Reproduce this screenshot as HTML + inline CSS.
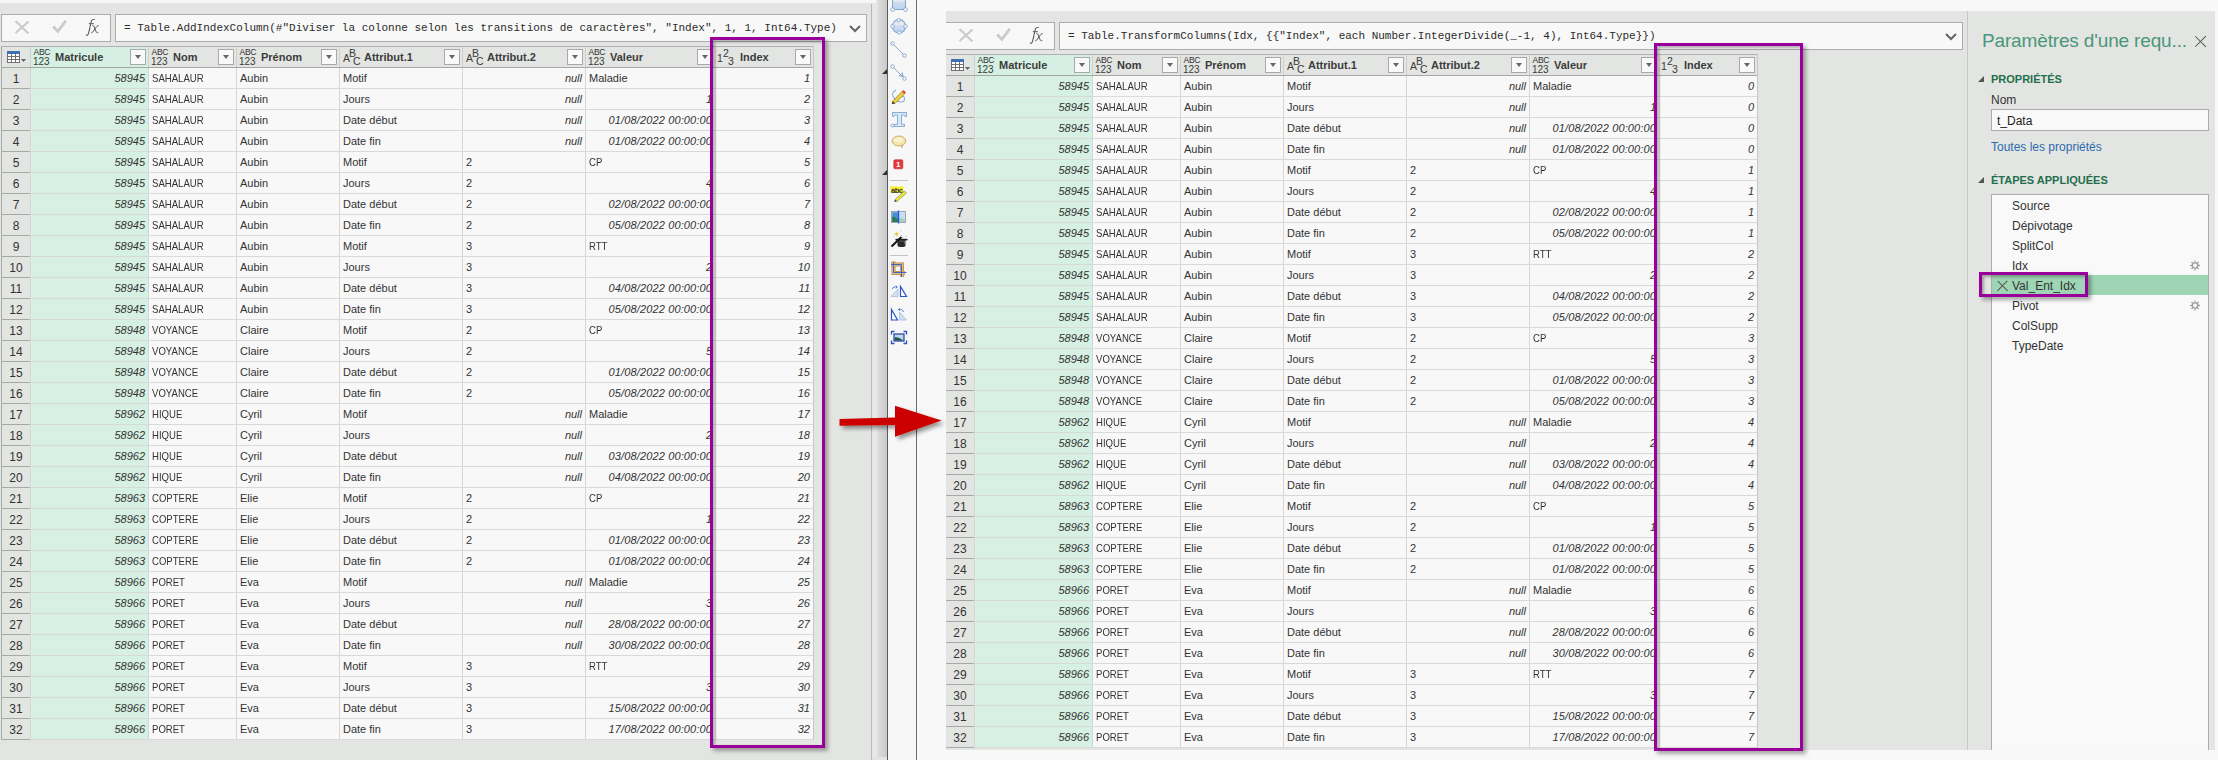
<!DOCTYPE html>
<html><head><meta charset="utf-8"><style>
html,body{margin:0;padding:0}
body{width:2218px;height:760px;overflow:hidden;position:relative;background:#f8f8f8;font-family:"Liberation Sans",sans-serif;color:#333}
div,span{box-sizing:border-box}
#lp{position:absolute;left:0;top:0;width:887px;height:760px;background:#e3e5e2;overflow:hidden}
.lp-top{position:absolute;left:0;top:0;width:876px;height:3px;background:#f6f6f6}
.lp-vl{position:absolute;left:871px;top:4px;width:1px;height:756px;background:#b9b9b9}
.lp-grad{position:absolute;left:872px;top:0px;width:15px;height:757px;background:linear-gradient(to right,#e6e8e5 0,#e6e8e5 5px,#dcdcdc 6px,#c9c9c9 15px)}
.lp-tri{position:absolute;left:882px;width:0;height:0;border-left:5px solid transparent;border-bottom:5px solid #333}
.pn{position:absolute;width:1100px;height:760px}
.fbl{position:absolute;left:1px;top:14px;width:110px;height:28px;border:1px solid #ababab;background:#f8f8f8}
.fbi{position:absolute;left:115px;top:14px;height:28px;border:1px solid #ababab;background:#f8f8f8}
.ftxt{position:absolute;left:8px;top:0;line-height:26px;font-family:"Liberation Mono",monospace;font-size:11px;color:#2a2a2a;white-space:pre}
.chev{position:absolute;right:5px;top:10px;width:12px;height:8px}
.fx-x{position:absolute;left:12px;top:4px;width:16px;height:16px}
.fx-x:before,.fx-x:after{content:"";position:absolute;left:7px;top:-1px;width:2px;height:18px;background:#c8c8c8;transform:rotate(45deg)}
.fx-x:after{transform:rotate(-45deg)}
.fx-c{position:absolute;left:54px;top:3px;width:7px;height:12px;border-right:2.5px solid #c8c8c8;border-bottom:2.5px solid #c8c8c8;transform:rotate(40deg)}
.fx-f{position:absolute;left:85px;top:2px;font-family:"Liberation Serif",serif;font-style:italic;font-size:17px;line-height:20px;color:#555;letter-spacing:-1px}
.hdr{position:absolute;height:22px;border-top:1px solid #b0b0b0;border-bottom:1px solid #a6a6a6;background:#e3e5e2}
.hc{position:absolute;top:47px;height:20px;border-left:1px solid #cfcfcf;background:#e3e5e2;white-space:nowrap}
.hc.sel{background:#d5f0e2}
.hn{position:absolute;left:24px;top:0;line-height:20px;font-size:11px;font-weight:bold;color:#3c3c3c}
.dd{position:absolute;right:2px;top:2px;width:16px;height:16px;border:1px solid #a9a9a9;background:#f9f9f9}
.dd:after{content:"";position:absolute;left:3.5px;top:4.5px;border-left:3.5px solid transparent;border-right:3.5px solid transparent;border-top:4px solid #666}
.ti{position:absolute;left:2px;top:2px;width:18px;height:17px;color:#3a3a3a}
.t1a{position:absolute;left:0.5px;top:-1px;font-size:8.6px;line-height:9px;letter-spacing:-0.35px;color:#333}
.t1b{position:absolute;left:0px;top:7.5px;font-size:10px;line-height:10px;letter-spacing:-0.1px}
.t2a,.t2b,.t2c{position:absolute;font-size:10.5px;line-height:10px}
.t2a{left:1px;top:4px}.t2b{left:7px;top:-1px}.t2c{left:11px;top:7px}
.tblico{position:absolute;width:20px;height:12px}
.c{position:absolute;height:21px;line-height:20px;font-size:11px;padding:0 3px;border-left:1px solid #d6d6d6;border-bottom:1px solid #d9d9d9;background:#f8f8f8;white-space:nowrap;overflow:hidden;color:#333}
.c.sel{background:#d6f0e3}
.c.ir{text-align:right;font-style:italic;padding-right:3px}
.rn{position:absolute;left:1px;width:30px;height:21px;line-height:22px;font-size:12px;text-align:center;border-left:1px solid #a8a8a8;border-right:1px solid #a8a8a8;border-bottom:1px solid #a8a8a8;background:#e3e5e2;color:#333}
#rp{position:absolute;left:917px;top:0;width:1301px;height:760px}
.rp-gray{position:absolute;left:29px;top:11px;width:1269px;height:739px;background:#e3e5e2}
.rp-clip{position:absolute;left:29px;top:0;width:1021px;height:750px;overflow:hidden}
.hl{position:absolute;border:3px solid #990099;box-shadow:3px 3px 4px rgba(0,0,0,.33),inset 2px 2px 3px rgba(0,0,0,.3)}
.ptitle{position:absolute;left:1065px;top:30px;font-size:19px;line-height:22px;color:#4a967a;white-space:nowrap;letter-spacing:-0.15px}
.pclose{position:absolute;left:1278px;top:36px;width:11px;height:11px}
.pclose:before,.pclose:after{content:"";position:absolute;left:5px;top:-2px;width:1.2px;height:15px;background:#555;transform:rotate(45deg)}
.pclose:after{transform:rotate(-45deg)}
.ptri{position:absolute;left:1061px;width:0;height:0;border-left:6px solid transparent;border-bottom:6px solid #555}
.psec{position:absolute;left:1074px;line-height:14px;font-size:11px;font-weight:bold;color:#1f6f4b;white-space:nowrap}
.plbl{position:absolute;left:1074px;line-height:16px;font-size:12px;color:#333}
.pinput{position:absolute;left:1074px;top:109px;width:218px;height:22px;border:1px solid #ababab;background:#f9f9f9;font-size:12px;line-height:22px;padding-left:5px;color:#222}
.plink{position:absolute;left:1074px;top:140px;line-height:14px;font-size:12px;color:#2b6cb0;white-space:nowrap}
.psteps{position:absolute;left:1074px;top:194px;width:218px;height:556px;border:1px solid #ababab;border-bottom:none;background:#f9f9f9}
.st{position:absolute;left:0;width:216px;height:20px;line-height:23px;font-size:12px;padding-left:20px;color:#333;white-space:nowrap}
.stsel{background:#9ed5b4}
.gear{position:absolute;right:7px;top:5px;width:12px;height:11px}
.stx{position:absolute;left:5px;top:5px;width:11px;height:11px}
.stx:before,.stx:after{content:"";position:absolute;left:5px;top:-1px;width:1.2px;height:13.5px;background:#555;transform:rotate(45deg)}
.stx:after{transform:rotate(-45deg)}
.rnh{position:absolute;left:1px;top:47px;width:30px;height:20px;border-left:1px solid #a8a8a8;border-right:1px solid #a8a8a8;background:#e3e5e2}
.tblico{position:absolute}
.up{display:inline-block;transform:scaleX(0.87);transform-origin:0 50%}
.c.dt{letter-spacing:0.13px}

</style></head><body>
<div id="lp">
<div class="lp-grad"></div>
<div class="lp-top"></div>
<div class="lp-vl"></div>
<div class="lp-tri" style="top:69px"></div>
<div class="lp-tri" style="top:170px"></div>
<div class="pn" style="left:0;top:0">
<div class="fbl"><svg width="110" height="28" viewBox="1 14 110 28" style="position:absolute;left:-1px;top:-1px"><path d="M15.5 21 L28.5 33.5 M28.5 21.5 L15.5 33" stroke="#cbcbcb" stroke-width="2.3" fill="none"/><path d="M53.2 26.5 L57.8 31.3 L65.8 20.8" stroke="#cbcbcb" stroke-width="2.8" fill="none"/><path d="M94.6 19.8 C93.4 19 91.8 19.6 91.3 21.5 L88.6 33.2 C88.2 35 87 35.6 86 35" stroke="#555" stroke-width="1.05" fill="none"/><path d="M88.8 23.7 H93.8" stroke="#555" stroke-width="0.95" fill="none"/><path d="M92.3 25.6 C93.3 25.4 93.8 26 94.2 27 L96.2 31.8 C96.6 32.7 97.3 33 98.3 32.4 M98.8 25.8 C98 25.4 97.3 25.8 96.6 26.6 L92.6 32.2 C92.1 32.9 91.6 32.8 91.2 32.5" stroke="#555" stroke-width="1" fill="none"/></svg></div>
<div class="fbi" style="width:752px"><span class="ftxt">= Table.AddIndexColumn(#&quot;Diviser la colonne selon les transitions de caractères&quot;, &quot;Index&quot;, 1, 1, Int64.Type)</span><svg class="chev" viewBox="0 0 12 8"><polyline points="1,1 6,6 11,1" fill="none" stroke="#666" stroke-width="2"/></svg></div>
<div class="hdr" style="left:1px;top:46px;width:813px;"></div>
<div class="rnh"></div>
<svg class="tblico" width="20" height="12" viewBox="0 0 20 12" shape-rendering="crispEdges" style="left:7px;top:51px"><rect x="0" y="0" width="13" height="12" fill="#707070"/><rect x="0" y="0" width="13" height="3" fill="#3f6fb4"/><path d="M1 3h3v2h-3zM5 3h3v2h-3zM9 3h3v2h-3zM1 6h3v2h-3zM5 6h3v2h-3zM9 6h3v2h-3zM1 9h3v2h-3zM5 9h3v2h-3zM9 9h3v2h-3z" fill="#fff"/><path d="M14 8H19L16.5 11Z" fill="#666" shape-rendering="auto"/></svg>
<div class="hc sel" style="left:30px;width:118px"><span class="ti ti1"><span class="t1a">ABC</span><span class="t1b">123</span></span><span class="hn">Matricule</span><span class="dd"></span></div>
<div class="hc" style="left:148px;width:88px"><span class="ti ti1"><span class="t1a">ABC</span><span class="t1b">123</span></span><span class="hn">Nom</span><span class="dd"></span></div>
<div class="hc" style="left:236px;width:103px"><span class="ti ti1"><span class="t1a">ABC</span><span class="t1b">123</span></span><span class="hn">Prénom</span><span class="dd"></span></div>
<div class="hc" style="left:339px;width:123px"><span class="ti ti2"><span class="t2a">A</span><span class="t2b">B</span><span class="t2c">C</span></span><span class="hn">Attribut.1</span><span class="dd"></span></div>
<div class="hc" style="left:462px;width:123px"><span class="ti ti2"><span class="t2a">A</span><span class="t2b">B</span><span class="t2c">C</span></span><span class="hn">Attribut.2</span><span class="dd"></span></div>
<div class="hc" style="left:585px;width:130px"><span class="ti ti1"><span class="t1a">ABC</span><span class="t1b">123</span></span><span class="hn">Valeur</span><span class="dd"></span></div>
<div class="hc" style="left:715px;width:98px"><span class="ti ti2"><span class="t2a" style="left:-1px">1</span><span class="t2b" style="left:5px">2</span><span class="t2c" style="left:10px">3</span></span><span class="hn">Index</span><span class="dd"></span></div>
<div style="position:absolute;left:813px;top:46px;width:1px;height:694px;background:#c8c8c8"></div>
<div class="rn" style="top:68px">1</div>
<div class="c ir sel" style="left:30px;top:68px;width:118px">58945</div>
<div class="c " style="left:148px;top:68px;width:88px"><span class="up">SAHALAUR</span></div>
<div class="c " style="left:236px;top:68px;width:103px">Aubin</div>
<div class="c " style="left:339px;top:68px;width:123px">Motif</div>
<div class="c ir" style="left:462px;top:68px;width:123px">null</div>
<div class="c " style="left:585px;top:68px;width:130px">Maladie</div>
<div class="c ir" style="left:715px;top:68px;width:98px">1</div>
<div class="rn" style="top:89px">2</div>
<div class="c ir sel" style="left:30px;top:89px;width:118px">58945</div>
<div class="c " style="left:148px;top:89px;width:88px"><span class="up">SAHALAUR</span></div>
<div class="c " style="left:236px;top:89px;width:103px">Aubin</div>
<div class="c " style="left:339px;top:89px;width:123px">Jours</div>
<div class="c ir" style="left:462px;top:89px;width:123px">null</div>
<div class="c ir" style="left:585px;top:89px;width:130px">1</div>
<div class="c ir" style="left:715px;top:89px;width:98px">2</div>
<div class="rn" style="top:110px">3</div>
<div class="c ir sel" style="left:30px;top:110px;width:118px">58945</div>
<div class="c " style="left:148px;top:110px;width:88px"><span class="up">SAHALAUR</span></div>
<div class="c " style="left:236px;top:110px;width:103px">Aubin</div>
<div class="c " style="left:339px;top:110px;width:123px">Date début</div>
<div class="c ir" style="left:462px;top:110px;width:123px">null</div>
<div class="c ir dt" style="left:585px;top:110px;width:130px">01/08/2022 00:00:00</div>
<div class="c ir" style="left:715px;top:110px;width:98px">3</div>
<div class="rn" style="top:131px">4</div>
<div class="c ir sel" style="left:30px;top:131px;width:118px">58945</div>
<div class="c " style="left:148px;top:131px;width:88px"><span class="up">SAHALAUR</span></div>
<div class="c " style="left:236px;top:131px;width:103px">Aubin</div>
<div class="c " style="left:339px;top:131px;width:123px">Date fin</div>
<div class="c ir" style="left:462px;top:131px;width:123px">null</div>
<div class="c ir dt" style="left:585px;top:131px;width:130px">01/08/2022 00:00:00</div>
<div class="c ir" style="left:715px;top:131px;width:98px">4</div>
<div class="rn" style="top:152px">5</div>
<div class="c ir sel" style="left:30px;top:152px;width:118px">58945</div>
<div class="c " style="left:148px;top:152px;width:88px"><span class="up">SAHALAUR</span></div>
<div class="c " style="left:236px;top:152px;width:103px">Aubin</div>
<div class="c " style="left:339px;top:152px;width:123px">Motif</div>
<div class="c " style="left:462px;top:152px;width:123px">2</div>
<div class="c " style="left:585px;top:152px;width:130px"><span class="up">CP</span></div>
<div class="c ir" style="left:715px;top:152px;width:98px">5</div>
<div class="rn" style="top:173px">6</div>
<div class="c ir sel" style="left:30px;top:173px;width:118px">58945</div>
<div class="c " style="left:148px;top:173px;width:88px"><span class="up">SAHALAUR</span></div>
<div class="c " style="left:236px;top:173px;width:103px">Aubin</div>
<div class="c " style="left:339px;top:173px;width:123px">Jours</div>
<div class="c " style="left:462px;top:173px;width:123px">2</div>
<div class="c ir" style="left:585px;top:173px;width:130px">4</div>
<div class="c ir" style="left:715px;top:173px;width:98px">6</div>
<div class="rn" style="top:194px">7</div>
<div class="c ir sel" style="left:30px;top:194px;width:118px">58945</div>
<div class="c " style="left:148px;top:194px;width:88px"><span class="up">SAHALAUR</span></div>
<div class="c " style="left:236px;top:194px;width:103px">Aubin</div>
<div class="c " style="left:339px;top:194px;width:123px">Date début</div>
<div class="c " style="left:462px;top:194px;width:123px">2</div>
<div class="c ir dt" style="left:585px;top:194px;width:130px">02/08/2022 00:00:00</div>
<div class="c ir" style="left:715px;top:194px;width:98px">7</div>
<div class="rn" style="top:215px">8</div>
<div class="c ir sel" style="left:30px;top:215px;width:118px">58945</div>
<div class="c " style="left:148px;top:215px;width:88px"><span class="up">SAHALAUR</span></div>
<div class="c " style="left:236px;top:215px;width:103px">Aubin</div>
<div class="c " style="left:339px;top:215px;width:123px">Date fin</div>
<div class="c " style="left:462px;top:215px;width:123px">2</div>
<div class="c ir dt" style="left:585px;top:215px;width:130px">05/08/2022 00:00:00</div>
<div class="c ir" style="left:715px;top:215px;width:98px">8</div>
<div class="rn" style="top:236px">9</div>
<div class="c ir sel" style="left:30px;top:236px;width:118px">58945</div>
<div class="c " style="left:148px;top:236px;width:88px"><span class="up">SAHALAUR</span></div>
<div class="c " style="left:236px;top:236px;width:103px">Aubin</div>
<div class="c " style="left:339px;top:236px;width:123px">Motif</div>
<div class="c " style="left:462px;top:236px;width:123px">3</div>
<div class="c " style="left:585px;top:236px;width:130px"><span class="up">RTT</span></div>
<div class="c ir" style="left:715px;top:236px;width:98px">9</div>
<div class="rn" style="top:257px">10</div>
<div class="c ir sel" style="left:30px;top:257px;width:118px">58945</div>
<div class="c " style="left:148px;top:257px;width:88px"><span class="up">SAHALAUR</span></div>
<div class="c " style="left:236px;top:257px;width:103px">Aubin</div>
<div class="c " style="left:339px;top:257px;width:123px">Jours</div>
<div class="c " style="left:462px;top:257px;width:123px">3</div>
<div class="c ir" style="left:585px;top:257px;width:130px">2</div>
<div class="c ir" style="left:715px;top:257px;width:98px">10</div>
<div class="rn" style="top:278px">11</div>
<div class="c ir sel" style="left:30px;top:278px;width:118px">58945</div>
<div class="c " style="left:148px;top:278px;width:88px"><span class="up">SAHALAUR</span></div>
<div class="c " style="left:236px;top:278px;width:103px">Aubin</div>
<div class="c " style="left:339px;top:278px;width:123px">Date début</div>
<div class="c " style="left:462px;top:278px;width:123px">3</div>
<div class="c ir dt" style="left:585px;top:278px;width:130px">04/08/2022 00:00:00</div>
<div class="c ir" style="left:715px;top:278px;width:98px">11</div>
<div class="rn" style="top:299px">12</div>
<div class="c ir sel" style="left:30px;top:299px;width:118px">58945</div>
<div class="c " style="left:148px;top:299px;width:88px"><span class="up">SAHALAUR</span></div>
<div class="c " style="left:236px;top:299px;width:103px">Aubin</div>
<div class="c " style="left:339px;top:299px;width:123px">Date fin</div>
<div class="c " style="left:462px;top:299px;width:123px">3</div>
<div class="c ir dt" style="left:585px;top:299px;width:130px">05/08/2022 00:00:00</div>
<div class="c ir" style="left:715px;top:299px;width:98px">12</div>
<div class="rn" style="top:320px">13</div>
<div class="c ir sel" style="left:30px;top:320px;width:118px">58948</div>
<div class="c " style="left:148px;top:320px;width:88px"><span class="up">VOYANCE</span></div>
<div class="c " style="left:236px;top:320px;width:103px">Claire</div>
<div class="c " style="left:339px;top:320px;width:123px">Motif</div>
<div class="c " style="left:462px;top:320px;width:123px">2</div>
<div class="c " style="left:585px;top:320px;width:130px"><span class="up">CP</span></div>
<div class="c ir" style="left:715px;top:320px;width:98px">13</div>
<div class="rn" style="top:341px">14</div>
<div class="c ir sel" style="left:30px;top:341px;width:118px">58948</div>
<div class="c " style="left:148px;top:341px;width:88px"><span class="up">VOYANCE</span></div>
<div class="c " style="left:236px;top:341px;width:103px">Claire</div>
<div class="c " style="left:339px;top:341px;width:123px">Jours</div>
<div class="c " style="left:462px;top:341px;width:123px">2</div>
<div class="c ir" style="left:585px;top:341px;width:130px">5</div>
<div class="c ir" style="left:715px;top:341px;width:98px">14</div>
<div class="rn" style="top:362px">15</div>
<div class="c ir sel" style="left:30px;top:362px;width:118px">58948</div>
<div class="c " style="left:148px;top:362px;width:88px"><span class="up">VOYANCE</span></div>
<div class="c " style="left:236px;top:362px;width:103px">Claire</div>
<div class="c " style="left:339px;top:362px;width:123px">Date début</div>
<div class="c " style="left:462px;top:362px;width:123px">2</div>
<div class="c ir dt" style="left:585px;top:362px;width:130px">01/08/2022 00:00:00</div>
<div class="c ir" style="left:715px;top:362px;width:98px">15</div>
<div class="rn" style="top:383px">16</div>
<div class="c ir sel" style="left:30px;top:383px;width:118px">58948</div>
<div class="c " style="left:148px;top:383px;width:88px"><span class="up">VOYANCE</span></div>
<div class="c " style="left:236px;top:383px;width:103px">Claire</div>
<div class="c " style="left:339px;top:383px;width:123px">Date fin</div>
<div class="c " style="left:462px;top:383px;width:123px">2</div>
<div class="c ir dt" style="left:585px;top:383px;width:130px">05/08/2022 00:00:00</div>
<div class="c ir" style="left:715px;top:383px;width:98px">16</div>
<div class="rn" style="top:404px">17</div>
<div class="c ir sel" style="left:30px;top:404px;width:118px">58962</div>
<div class="c " style="left:148px;top:404px;width:88px"><span class="up">HIQUE</span></div>
<div class="c " style="left:236px;top:404px;width:103px">Cyril</div>
<div class="c " style="left:339px;top:404px;width:123px">Motif</div>
<div class="c ir" style="left:462px;top:404px;width:123px">null</div>
<div class="c " style="left:585px;top:404px;width:130px">Maladie</div>
<div class="c ir" style="left:715px;top:404px;width:98px">17</div>
<div class="rn" style="top:425px">18</div>
<div class="c ir sel" style="left:30px;top:425px;width:118px">58962</div>
<div class="c " style="left:148px;top:425px;width:88px"><span class="up">HIQUE</span></div>
<div class="c " style="left:236px;top:425px;width:103px">Cyril</div>
<div class="c " style="left:339px;top:425px;width:123px">Jours</div>
<div class="c ir" style="left:462px;top:425px;width:123px">null</div>
<div class="c ir" style="left:585px;top:425px;width:130px">2</div>
<div class="c ir" style="left:715px;top:425px;width:98px">18</div>
<div class="rn" style="top:446px">19</div>
<div class="c ir sel" style="left:30px;top:446px;width:118px">58962</div>
<div class="c " style="left:148px;top:446px;width:88px"><span class="up">HIQUE</span></div>
<div class="c " style="left:236px;top:446px;width:103px">Cyril</div>
<div class="c " style="left:339px;top:446px;width:123px">Date début</div>
<div class="c ir" style="left:462px;top:446px;width:123px">null</div>
<div class="c ir dt" style="left:585px;top:446px;width:130px">03/08/2022 00:00:00</div>
<div class="c ir" style="left:715px;top:446px;width:98px">19</div>
<div class="rn" style="top:467px">20</div>
<div class="c ir sel" style="left:30px;top:467px;width:118px">58962</div>
<div class="c " style="left:148px;top:467px;width:88px"><span class="up">HIQUE</span></div>
<div class="c " style="left:236px;top:467px;width:103px">Cyril</div>
<div class="c " style="left:339px;top:467px;width:123px">Date fin</div>
<div class="c ir" style="left:462px;top:467px;width:123px">null</div>
<div class="c ir dt" style="left:585px;top:467px;width:130px">04/08/2022 00:00:00</div>
<div class="c ir" style="left:715px;top:467px;width:98px">20</div>
<div class="rn" style="top:488px">21</div>
<div class="c ir sel" style="left:30px;top:488px;width:118px">58963</div>
<div class="c " style="left:148px;top:488px;width:88px"><span class="up">COPTERE</span></div>
<div class="c " style="left:236px;top:488px;width:103px">Elie</div>
<div class="c " style="left:339px;top:488px;width:123px">Motif</div>
<div class="c " style="left:462px;top:488px;width:123px">2</div>
<div class="c " style="left:585px;top:488px;width:130px"><span class="up">CP</span></div>
<div class="c ir" style="left:715px;top:488px;width:98px">21</div>
<div class="rn" style="top:509px">22</div>
<div class="c ir sel" style="left:30px;top:509px;width:118px">58963</div>
<div class="c " style="left:148px;top:509px;width:88px"><span class="up">COPTERE</span></div>
<div class="c " style="left:236px;top:509px;width:103px">Elie</div>
<div class="c " style="left:339px;top:509px;width:123px">Jours</div>
<div class="c " style="left:462px;top:509px;width:123px">2</div>
<div class="c ir" style="left:585px;top:509px;width:130px">1</div>
<div class="c ir" style="left:715px;top:509px;width:98px">22</div>
<div class="rn" style="top:530px">23</div>
<div class="c ir sel" style="left:30px;top:530px;width:118px">58963</div>
<div class="c " style="left:148px;top:530px;width:88px"><span class="up">COPTERE</span></div>
<div class="c " style="left:236px;top:530px;width:103px">Elie</div>
<div class="c " style="left:339px;top:530px;width:123px">Date début</div>
<div class="c " style="left:462px;top:530px;width:123px">2</div>
<div class="c ir dt" style="left:585px;top:530px;width:130px">01/08/2022 00:00:00</div>
<div class="c ir" style="left:715px;top:530px;width:98px">23</div>
<div class="rn" style="top:551px">24</div>
<div class="c ir sel" style="left:30px;top:551px;width:118px">58963</div>
<div class="c " style="left:148px;top:551px;width:88px"><span class="up">COPTERE</span></div>
<div class="c " style="left:236px;top:551px;width:103px">Elie</div>
<div class="c " style="left:339px;top:551px;width:123px">Date fin</div>
<div class="c " style="left:462px;top:551px;width:123px">2</div>
<div class="c ir dt" style="left:585px;top:551px;width:130px">01/08/2022 00:00:00</div>
<div class="c ir" style="left:715px;top:551px;width:98px">24</div>
<div class="rn" style="top:572px">25</div>
<div class="c ir sel" style="left:30px;top:572px;width:118px">58966</div>
<div class="c " style="left:148px;top:572px;width:88px"><span class="up">PORET</span></div>
<div class="c " style="left:236px;top:572px;width:103px">Eva</div>
<div class="c " style="left:339px;top:572px;width:123px">Motif</div>
<div class="c ir" style="left:462px;top:572px;width:123px">null</div>
<div class="c " style="left:585px;top:572px;width:130px">Maladie</div>
<div class="c ir" style="left:715px;top:572px;width:98px">25</div>
<div class="rn" style="top:593px">26</div>
<div class="c ir sel" style="left:30px;top:593px;width:118px">58966</div>
<div class="c " style="left:148px;top:593px;width:88px"><span class="up">PORET</span></div>
<div class="c " style="left:236px;top:593px;width:103px">Eva</div>
<div class="c " style="left:339px;top:593px;width:123px">Jours</div>
<div class="c ir" style="left:462px;top:593px;width:123px">null</div>
<div class="c ir" style="left:585px;top:593px;width:130px">3</div>
<div class="c ir" style="left:715px;top:593px;width:98px">26</div>
<div class="rn" style="top:614px">27</div>
<div class="c ir sel" style="left:30px;top:614px;width:118px">58966</div>
<div class="c " style="left:148px;top:614px;width:88px"><span class="up">PORET</span></div>
<div class="c " style="left:236px;top:614px;width:103px">Eva</div>
<div class="c " style="left:339px;top:614px;width:123px">Date début</div>
<div class="c ir" style="left:462px;top:614px;width:123px">null</div>
<div class="c ir dt" style="left:585px;top:614px;width:130px">28/08/2022 00:00:00</div>
<div class="c ir" style="left:715px;top:614px;width:98px">27</div>
<div class="rn" style="top:635px">28</div>
<div class="c ir sel" style="left:30px;top:635px;width:118px">58966</div>
<div class="c " style="left:148px;top:635px;width:88px"><span class="up">PORET</span></div>
<div class="c " style="left:236px;top:635px;width:103px">Eva</div>
<div class="c " style="left:339px;top:635px;width:123px">Date fin</div>
<div class="c ir" style="left:462px;top:635px;width:123px">null</div>
<div class="c ir dt" style="left:585px;top:635px;width:130px">30/08/2022 00:00:00</div>
<div class="c ir" style="left:715px;top:635px;width:98px">28</div>
<div class="rn" style="top:656px">29</div>
<div class="c ir sel" style="left:30px;top:656px;width:118px">58966</div>
<div class="c " style="left:148px;top:656px;width:88px"><span class="up">PORET</span></div>
<div class="c " style="left:236px;top:656px;width:103px">Eva</div>
<div class="c " style="left:339px;top:656px;width:123px">Motif</div>
<div class="c " style="left:462px;top:656px;width:123px">3</div>
<div class="c " style="left:585px;top:656px;width:130px"><span class="up">RTT</span></div>
<div class="c ir" style="left:715px;top:656px;width:98px">29</div>
<div class="rn" style="top:677px">30</div>
<div class="c ir sel" style="left:30px;top:677px;width:118px">58966</div>
<div class="c " style="left:148px;top:677px;width:88px"><span class="up">PORET</span></div>
<div class="c " style="left:236px;top:677px;width:103px">Eva</div>
<div class="c " style="left:339px;top:677px;width:123px">Jours</div>
<div class="c " style="left:462px;top:677px;width:123px">3</div>
<div class="c ir" style="left:585px;top:677px;width:130px">3</div>
<div class="c ir" style="left:715px;top:677px;width:98px">30</div>
<div class="rn" style="top:698px">31</div>
<div class="c ir sel" style="left:30px;top:698px;width:118px">58966</div>
<div class="c " style="left:148px;top:698px;width:88px"><span class="up">PORET</span></div>
<div class="c " style="left:236px;top:698px;width:103px">Eva</div>
<div class="c " style="left:339px;top:698px;width:123px">Date début</div>
<div class="c " style="left:462px;top:698px;width:123px">3</div>
<div class="c ir dt" style="left:585px;top:698px;width:130px">15/08/2022 00:00:00</div>
<div class="c ir" style="left:715px;top:698px;width:98px">31</div>
<div class="rn" style="top:719px">32</div>
<div class="c ir sel" style="left:30px;top:719px;width:118px">58966</div>
<div class="c " style="left:148px;top:719px;width:88px"><span class="up">PORET</span></div>
<div class="c " style="left:236px;top:719px;width:103px">Eva</div>
<div class="c " style="left:339px;top:719px;width:123px">Date fin</div>
<div class="c " style="left:462px;top:719px;width:123px">3</div>
<div class="c ir dt" style="left:585px;top:719px;width:130px">17/08/2022 00:00:00</div>
<div class="c ir" style="left:715px;top:719px;width:98px">32</div>
</div>
</div>
<div id="tb" style="position:absolute;left:887px;top:0;width:30px;height:760px;background:#f7f7f7;border-left:1.5px solid #5a5a5a;border-right:1.5px solid #6a6a6a"></div>
<svg style="position:absolute;left:885px;top:0" width="35" height="360" viewBox="885 0 35 360">
<defs>
<linearGradient id="gb" x1="0" y1="0" x2="0" y2="1"><stop offset="0" stop-color="#ecebeb"/><stop offset="0.35" stop-color="#e8e9ec"/><stop offset="0.5" stop-color="#c9dcf1"/><stop offset="1" stop-color="#bcd4ee"/></linearGradient>
</defs>
<g stroke="#84a6ce" stroke-width="1" fill="none">
<!-- rectangle -->
<rect x="892.5" y="-4" width="13" height="13.5" fill="url(#gb)"/>
<circle cx="892.5" cy="9.5" r="1.8" fill="#fff"/><circle cx="905.5" cy="9.5" r="1.8" fill="#fff"/>
<!-- ellipse -->
<circle cx="899" cy="26.3" r="6.7" fill="url(#gb)" stroke-width="1.1"/>
<circle cx="898.5" cy="20.2" r="1.7" fill="#fff"/><circle cx="892.5" cy="26.3" r="1.7" fill="#fff"/><circle cx="905.5" cy="26.3" r="1.7" fill="#fff"/><circle cx="899.3" cy="32.4" r="1.7" fill="#fff"/>
<!-- line -->
<line x1="893.5" y1="44.5" x2="903.5" y2="54.6"/>
<circle cx="892.5" cy="43.5" r="1.7" fill="#fff"/><circle cx="904.5" cy="55.6" r="1.7" fill="#fff"/>
<!-- arrow line -->
<line x1="893.5" y1="67.5" x2="903.5" y2="77.6"/>
<path d="M899 75.5 L903 76.5 L902 72.5" stroke-width="1.2"/>
<circle cx="892.5" cy="66.5" r="1.7" fill="#fff"/><circle cx="904.5" cy="78.6" r="1.7" fill="#fff"/>
<!-- T -->
<path d="M892.5 112.5 H906.5 V116.5 H905 L904.3 115 H901.5 V124.3 H904.5 V126.5 H894.5 V124.3 H897.5 V115 H894.7 L894 116.5 H892.5 Z" fill="#d9e8f7" stroke="#7ea4d0" stroke-width="0.9"/>
<circle cx="892.5" cy="125.5" r="1.5" fill="#fff" stroke="#7ea4d0"/>
</g>
<!-- pencil scribble -->
<path d="M896 90 C891 93 892 97 896 100 C900 103 905 103 904.5 98 C904 95 900 96 897 98" stroke="#8bb2df" stroke-width="1.1" fill="none"/>
<path d="M892.5 101.5 L902 91.5 L904.5 94 L895 103.5 Z" fill="#f2cf3a" stroke="#8a6a10" stroke-width="0.7"/>
<path d="M902 91.5 L903.5 90 L906 92.5 L904.5 94 Z" fill="#e0483c"/>
<path d="M892.5 101.5 L891.8 104 L895 103.5 Z" fill="#222"/>
<!-- speech bubble -->
<ellipse cx="899" cy="141" rx="6.8" ry="5" fill="#f3e3a5" stroke="#c9a866" stroke-width="0.9"/>
<ellipse cx="898.5" cy="140" rx="4.8" ry="2.5" fill="#faf1cf"/>
<path d="M900.5 145.5 L902.5 148.5 L902.8 145" fill="#c9a866"/>
<!-- red 1 -->
<rect x="893.8" y="159.8" width="9" height="9" rx="1.2" fill="#e23a3a" stroke="#b82020" stroke-width="0.6"/>
<text x="898.3" y="167.3" font-family="Liberation Sans" font-weight="bold" font-size="8" fill="#fff" text-anchor="middle">1</text>
<line x1="890" y1="180.5" x2="908" y2="180.5" stroke="#c4c4c4" stroke-width="1"/>
<!-- abc highlighter -->
<rect x="890.5" y="186.5" width="13" height="6.5" fill="#f5ef2a"/>
<text x="891" y="192.5" font-family="Liberation Sans" font-weight="bold" font-size="7.5" fill="#333" letter-spacing="-0.5">abc</text>
<path d="M895 199.5 L904.5 191 L906.5 193 L897 201.5 Z" fill="#ebe53a" stroke="#6a6a40" stroke-width="0.5"/>
<path d="M895 199.5 L894.2 201.8 L897 201.5 Z" fill="#333"/>
<!-- image split -->
<rect x="891.5" y="211.5" width="14" height="11" fill="#dfe9ee" stroke="#8fa3a8" stroke-width="0.9"/>
<path d="M892.2 212.2 H898.5 V222 H892.2 Z" fill="#4a8fd8"/>
<path d="M892.2 222 V217 C894 216 896.5 218 898.5 220.5 V222 Z" fill="#2f7a52"/>
<path d="M899 212.2 H905 V222 H899 Z" fill="#c8dff0"/>
<path d="M899 218 C901 217 903 218.5 905 220 V222 H899 Z" fill="#a9cfc4"/>
<line x1="898.5" y1="210.5" x2="898.5" y2="223.5" stroke="#2a55d8" stroke-width="1.3"/>
<!-- magic wand -->
<path d="M897.5 240 H905.5 V245.5 C905.5 247.5 897.5 247.5 897.5 245.5 Z" fill="#2a2a2a"/>
<path d="M898.5 241 H904.5 V244" stroke="#777" stroke-width="0.8" fill="none"/>
<rect x="895.5" y="238.8" width="12" height="1.6" fill="#222"/>
<path d="M891.5 246.5 L902.5 236" stroke="#111" stroke-width="2"/>
<path d="M901.3 237.2 L903.6 235" stroke="#f2f2f2" stroke-width="1.8"/>
<path d="M896.5 231.5 l0.7 1.8 1.8 0.7 -1.8 0.7 -0.7 1.8 -0.7 -1.8 -1.8 -0.7 1.8 -0.7 Z" fill="#e3c12a"/>
<circle cx="901" cy="231" r="0.6" fill="#e3c12a"/><circle cx="906" cy="236.5" r="0.6" fill="#e3c12a"/><circle cx="894" cy="236" r="0.5" fill="#e3c12a"/>
<line x1="890" y1="255.5" x2="908" y2="255.5" stroke="#c4c4c4" stroke-width="1"/>
<!-- crop -->
<path d="M893.5 261.5 V273 H905 M891 264.5 H902 V277" stroke="#b98a4a" stroke-width="4" fill="none"/>
<path d="M893.5 261.5 V273 H905 M891 264.5 H902 V277" stroke="#e8b878" stroke-width="2.6" fill="none"/>
<path d="M893.5 262 V272.5 H906.5 M891 264.5 H901.5 V277" stroke="#2f5fd0" stroke-width="0.9" fill="none"/>
<!-- flip 1 -->
<path d="M891 296.5 L898 289 V296.5 Z" fill="#cfe0ef" stroke="#a8c0dc" stroke-width="0.8"/>
<path d="M900.5 296.5 V286.5 L906.5 296.5 Z" fill="#fff" stroke="#2a55c8" stroke-width="1.2"/>
<path d="M892 289 C893 287 895 286.5 897 287 M895.8 285.8 L897.3 287 L895.8 288.3" stroke="#3a6ad0" stroke-width="0.9" fill="none"/>
<!-- flip 2 -->
<path d="M891.5 320 V309.5 L897.5 320 Z" fill="#fff" stroke="#2a55c8" stroke-width="1.2"/>
<path d="M899.5 320 V312 L906.5 320 Z" fill="#cfe0ef" stroke="#a8c0dc" stroke-width="0.8"/>
<path d="M899 309.5 C901 309 903 310 903.5 312 M899.8 308.2 L898.5 309.5 L899.8 310.8" stroke="#3a6ad0" stroke-width="0.9" fill="none"/>
<!-- fit image -->
<path d="M891.5 334.5 V331.5 H894.5 M903.5 331.5 H906.5 V334.5 M906.5 340.5 V343.5 H903.5 M894.5 343.5 H891.5 V340.5" stroke="#2a55c8" stroke-width="1.3" fill="none"/>
<rect x="894" y="334" width="10" height="7" fill="#bcd7ee" stroke="#1f3fa0" stroke-width="1.2"/>
<path d="M894.6 340.4 V337.5 C897 336.5 900 338 903.4 340.4 Z" fill="#1d5a4a"/>
</svg>

<div id="rp">
<div class="rp-gray"></div>
<div class="rp-clip">
<div class="pn" style="left:-2px;top:8px">
<div class="fbl"><svg width="110" height="28" viewBox="1 14 110 28" style="position:absolute;left:-1px;top:-1px"><path d="M15.5 21 L28.5 33.5 M28.5 21.5 L15.5 33" stroke="#cbcbcb" stroke-width="2.3" fill="none"/><path d="M53.2 26.5 L57.8 31.3 L65.8 20.8" stroke="#cbcbcb" stroke-width="2.8" fill="none"/><path d="M94.6 19.8 C93.4 19 91.8 19.6 91.3 21.5 L88.6 33.2 C88.2 35 87 35.6 86 35" stroke="#555" stroke-width="1.05" fill="none"/><path d="M88.8 23.7 H93.8" stroke="#555" stroke-width="0.95" fill="none"/><path d="M92.3 25.6 C93.3 25.4 93.8 26 94.2 27 L96.2 31.8 C96.6 32.7 97.3 33 98.3 32.4 M98.8 25.8 C98 25.4 97.3 25.8 96.6 26.6 L92.6 32.2 C92.1 32.9 91.6 32.8 91.2 32.5" stroke="#555" stroke-width="1" fill="none"/></svg></div>
<div class="fbi" style="width:904px"><span class="ftxt">= Table.TransformColumns(Idx, {{&quot;Index&quot;, each Number.IntegerDivide(_-1, 4), Int64.Type}})</span><svg class="chev" viewBox="0 0 12 8"><polyline points="1,1 6,6 11,1" fill="none" stroke="#666" stroke-width="2"/></svg></div>
<div class="hdr" style="left:1px;top:46px;width:813px;"></div>
<div class="rnh"></div>
<svg class="tblico" width="20" height="12" viewBox="0 0 20 12" shape-rendering="crispEdges" style="left:7px;top:51px"><rect x="0" y="0" width="13" height="12" fill="#707070"/><rect x="0" y="0" width="13" height="3" fill="#3f6fb4"/><path d="M1 3h3v2h-3zM5 3h3v2h-3zM9 3h3v2h-3zM1 6h3v2h-3zM5 6h3v2h-3zM9 6h3v2h-3zM1 9h3v2h-3zM5 9h3v2h-3zM9 9h3v2h-3z" fill="#fff"/><path d="M14 8H19L16.5 11Z" fill="#666" shape-rendering="auto"/></svg>
<div class="hc sel" style="left:30px;width:118px"><span class="ti ti1"><span class="t1a">ABC</span><span class="t1b">123</span></span><span class="hn">Matricule</span><span class="dd"></span></div>
<div class="hc" style="left:148px;width:88px"><span class="ti ti1"><span class="t1a">ABC</span><span class="t1b">123</span></span><span class="hn">Nom</span><span class="dd"></span></div>
<div class="hc" style="left:236px;width:103px"><span class="ti ti1"><span class="t1a">ABC</span><span class="t1b">123</span></span><span class="hn">Prénom</span><span class="dd"></span></div>
<div class="hc" style="left:339px;width:123px"><span class="ti ti2"><span class="t2a">A</span><span class="t2b">B</span><span class="t2c">C</span></span><span class="hn">Attribut.1</span><span class="dd"></span></div>
<div class="hc" style="left:462px;width:123px"><span class="ti ti2"><span class="t2a">A</span><span class="t2b">B</span><span class="t2c">C</span></span><span class="hn">Attribut.2</span><span class="dd"></span></div>
<div class="hc" style="left:585px;width:130px"><span class="ti ti1"><span class="t1a">ABC</span><span class="t1b">123</span></span><span class="hn">Valeur</span><span class="dd"></span></div>
<div class="hc" style="left:715px;width:98px"><span class="ti ti2"><span class="t2a" style="left:-1px">1</span><span class="t2b" style="left:5px">2</span><span class="t2c" style="left:10px">3</span></span><span class="hn">Index</span><span class="dd"></span></div>
<div style="position:absolute;left:813px;top:46px;width:1px;height:694px;background:#c8c8c8"></div>
<div class="rn" style="top:68px">1</div>
<div class="c ir sel" style="left:30px;top:68px;width:118px">58945</div>
<div class="c " style="left:148px;top:68px;width:88px"><span class="up">SAHALAUR</span></div>
<div class="c " style="left:236px;top:68px;width:103px">Aubin</div>
<div class="c " style="left:339px;top:68px;width:123px">Motif</div>
<div class="c ir" style="left:462px;top:68px;width:123px">null</div>
<div class="c " style="left:585px;top:68px;width:130px">Maladie</div>
<div class="c ir" style="left:715px;top:68px;width:98px">0</div>
<div class="rn" style="top:89px">2</div>
<div class="c ir sel" style="left:30px;top:89px;width:118px">58945</div>
<div class="c " style="left:148px;top:89px;width:88px"><span class="up">SAHALAUR</span></div>
<div class="c " style="left:236px;top:89px;width:103px">Aubin</div>
<div class="c " style="left:339px;top:89px;width:123px">Jours</div>
<div class="c ir" style="left:462px;top:89px;width:123px">null</div>
<div class="c ir" style="left:585px;top:89px;width:130px">1</div>
<div class="c ir" style="left:715px;top:89px;width:98px">0</div>
<div class="rn" style="top:110px">3</div>
<div class="c ir sel" style="left:30px;top:110px;width:118px">58945</div>
<div class="c " style="left:148px;top:110px;width:88px"><span class="up">SAHALAUR</span></div>
<div class="c " style="left:236px;top:110px;width:103px">Aubin</div>
<div class="c " style="left:339px;top:110px;width:123px">Date début</div>
<div class="c ir" style="left:462px;top:110px;width:123px">null</div>
<div class="c ir dt" style="left:585px;top:110px;width:130px">01/08/2022 00:00:00</div>
<div class="c ir" style="left:715px;top:110px;width:98px">0</div>
<div class="rn" style="top:131px">4</div>
<div class="c ir sel" style="left:30px;top:131px;width:118px">58945</div>
<div class="c " style="left:148px;top:131px;width:88px"><span class="up">SAHALAUR</span></div>
<div class="c " style="left:236px;top:131px;width:103px">Aubin</div>
<div class="c " style="left:339px;top:131px;width:123px">Date fin</div>
<div class="c ir" style="left:462px;top:131px;width:123px">null</div>
<div class="c ir dt" style="left:585px;top:131px;width:130px">01/08/2022 00:00:00</div>
<div class="c ir" style="left:715px;top:131px;width:98px">0</div>
<div class="rn" style="top:152px">5</div>
<div class="c ir sel" style="left:30px;top:152px;width:118px">58945</div>
<div class="c " style="left:148px;top:152px;width:88px"><span class="up">SAHALAUR</span></div>
<div class="c " style="left:236px;top:152px;width:103px">Aubin</div>
<div class="c " style="left:339px;top:152px;width:123px">Motif</div>
<div class="c " style="left:462px;top:152px;width:123px">2</div>
<div class="c " style="left:585px;top:152px;width:130px"><span class="up">CP</span></div>
<div class="c ir" style="left:715px;top:152px;width:98px">1</div>
<div class="rn" style="top:173px">6</div>
<div class="c ir sel" style="left:30px;top:173px;width:118px">58945</div>
<div class="c " style="left:148px;top:173px;width:88px"><span class="up">SAHALAUR</span></div>
<div class="c " style="left:236px;top:173px;width:103px">Aubin</div>
<div class="c " style="left:339px;top:173px;width:123px">Jours</div>
<div class="c " style="left:462px;top:173px;width:123px">2</div>
<div class="c ir" style="left:585px;top:173px;width:130px">4</div>
<div class="c ir" style="left:715px;top:173px;width:98px">1</div>
<div class="rn" style="top:194px">7</div>
<div class="c ir sel" style="left:30px;top:194px;width:118px">58945</div>
<div class="c " style="left:148px;top:194px;width:88px"><span class="up">SAHALAUR</span></div>
<div class="c " style="left:236px;top:194px;width:103px">Aubin</div>
<div class="c " style="left:339px;top:194px;width:123px">Date début</div>
<div class="c " style="left:462px;top:194px;width:123px">2</div>
<div class="c ir dt" style="left:585px;top:194px;width:130px">02/08/2022 00:00:00</div>
<div class="c ir" style="left:715px;top:194px;width:98px">1</div>
<div class="rn" style="top:215px">8</div>
<div class="c ir sel" style="left:30px;top:215px;width:118px">58945</div>
<div class="c " style="left:148px;top:215px;width:88px"><span class="up">SAHALAUR</span></div>
<div class="c " style="left:236px;top:215px;width:103px">Aubin</div>
<div class="c " style="left:339px;top:215px;width:123px">Date fin</div>
<div class="c " style="left:462px;top:215px;width:123px">2</div>
<div class="c ir dt" style="left:585px;top:215px;width:130px">05/08/2022 00:00:00</div>
<div class="c ir" style="left:715px;top:215px;width:98px">1</div>
<div class="rn" style="top:236px">9</div>
<div class="c ir sel" style="left:30px;top:236px;width:118px">58945</div>
<div class="c " style="left:148px;top:236px;width:88px"><span class="up">SAHALAUR</span></div>
<div class="c " style="left:236px;top:236px;width:103px">Aubin</div>
<div class="c " style="left:339px;top:236px;width:123px">Motif</div>
<div class="c " style="left:462px;top:236px;width:123px">3</div>
<div class="c " style="left:585px;top:236px;width:130px"><span class="up">RTT</span></div>
<div class="c ir" style="left:715px;top:236px;width:98px">2</div>
<div class="rn" style="top:257px">10</div>
<div class="c ir sel" style="left:30px;top:257px;width:118px">58945</div>
<div class="c " style="left:148px;top:257px;width:88px"><span class="up">SAHALAUR</span></div>
<div class="c " style="left:236px;top:257px;width:103px">Aubin</div>
<div class="c " style="left:339px;top:257px;width:123px">Jours</div>
<div class="c " style="left:462px;top:257px;width:123px">3</div>
<div class="c ir" style="left:585px;top:257px;width:130px">2</div>
<div class="c ir" style="left:715px;top:257px;width:98px">2</div>
<div class="rn" style="top:278px">11</div>
<div class="c ir sel" style="left:30px;top:278px;width:118px">58945</div>
<div class="c " style="left:148px;top:278px;width:88px"><span class="up">SAHALAUR</span></div>
<div class="c " style="left:236px;top:278px;width:103px">Aubin</div>
<div class="c " style="left:339px;top:278px;width:123px">Date début</div>
<div class="c " style="left:462px;top:278px;width:123px">3</div>
<div class="c ir dt" style="left:585px;top:278px;width:130px">04/08/2022 00:00:00</div>
<div class="c ir" style="left:715px;top:278px;width:98px">2</div>
<div class="rn" style="top:299px">12</div>
<div class="c ir sel" style="left:30px;top:299px;width:118px">58945</div>
<div class="c " style="left:148px;top:299px;width:88px"><span class="up">SAHALAUR</span></div>
<div class="c " style="left:236px;top:299px;width:103px">Aubin</div>
<div class="c " style="left:339px;top:299px;width:123px">Date fin</div>
<div class="c " style="left:462px;top:299px;width:123px">3</div>
<div class="c ir dt" style="left:585px;top:299px;width:130px">05/08/2022 00:00:00</div>
<div class="c ir" style="left:715px;top:299px;width:98px">2</div>
<div class="rn" style="top:320px">13</div>
<div class="c ir sel" style="left:30px;top:320px;width:118px">58948</div>
<div class="c " style="left:148px;top:320px;width:88px"><span class="up">VOYANCE</span></div>
<div class="c " style="left:236px;top:320px;width:103px">Claire</div>
<div class="c " style="left:339px;top:320px;width:123px">Motif</div>
<div class="c " style="left:462px;top:320px;width:123px">2</div>
<div class="c " style="left:585px;top:320px;width:130px"><span class="up">CP</span></div>
<div class="c ir" style="left:715px;top:320px;width:98px">3</div>
<div class="rn" style="top:341px">14</div>
<div class="c ir sel" style="left:30px;top:341px;width:118px">58948</div>
<div class="c " style="left:148px;top:341px;width:88px"><span class="up">VOYANCE</span></div>
<div class="c " style="left:236px;top:341px;width:103px">Claire</div>
<div class="c " style="left:339px;top:341px;width:123px">Jours</div>
<div class="c " style="left:462px;top:341px;width:123px">2</div>
<div class="c ir" style="left:585px;top:341px;width:130px">5</div>
<div class="c ir" style="left:715px;top:341px;width:98px">3</div>
<div class="rn" style="top:362px">15</div>
<div class="c ir sel" style="left:30px;top:362px;width:118px">58948</div>
<div class="c " style="left:148px;top:362px;width:88px"><span class="up">VOYANCE</span></div>
<div class="c " style="left:236px;top:362px;width:103px">Claire</div>
<div class="c " style="left:339px;top:362px;width:123px">Date début</div>
<div class="c " style="left:462px;top:362px;width:123px">2</div>
<div class="c ir dt" style="left:585px;top:362px;width:130px">01/08/2022 00:00:00</div>
<div class="c ir" style="left:715px;top:362px;width:98px">3</div>
<div class="rn" style="top:383px">16</div>
<div class="c ir sel" style="left:30px;top:383px;width:118px">58948</div>
<div class="c " style="left:148px;top:383px;width:88px"><span class="up">VOYANCE</span></div>
<div class="c " style="left:236px;top:383px;width:103px">Claire</div>
<div class="c " style="left:339px;top:383px;width:123px">Date fin</div>
<div class="c " style="left:462px;top:383px;width:123px">2</div>
<div class="c ir dt" style="left:585px;top:383px;width:130px">05/08/2022 00:00:00</div>
<div class="c ir" style="left:715px;top:383px;width:98px">3</div>
<div class="rn" style="top:404px">17</div>
<div class="c ir sel" style="left:30px;top:404px;width:118px">58962</div>
<div class="c " style="left:148px;top:404px;width:88px"><span class="up">HIQUE</span></div>
<div class="c " style="left:236px;top:404px;width:103px">Cyril</div>
<div class="c " style="left:339px;top:404px;width:123px">Motif</div>
<div class="c ir" style="left:462px;top:404px;width:123px">null</div>
<div class="c " style="left:585px;top:404px;width:130px">Maladie</div>
<div class="c ir" style="left:715px;top:404px;width:98px">4</div>
<div class="rn" style="top:425px">18</div>
<div class="c ir sel" style="left:30px;top:425px;width:118px">58962</div>
<div class="c " style="left:148px;top:425px;width:88px"><span class="up">HIQUE</span></div>
<div class="c " style="left:236px;top:425px;width:103px">Cyril</div>
<div class="c " style="left:339px;top:425px;width:123px">Jours</div>
<div class="c ir" style="left:462px;top:425px;width:123px">null</div>
<div class="c ir" style="left:585px;top:425px;width:130px">2</div>
<div class="c ir" style="left:715px;top:425px;width:98px">4</div>
<div class="rn" style="top:446px">19</div>
<div class="c ir sel" style="left:30px;top:446px;width:118px">58962</div>
<div class="c " style="left:148px;top:446px;width:88px"><span class="up">HIQUE</span></div>
<div class="c " style="left:236px;top:446px;width:103px">Cyril</div>
<div class="c " style="left:339px;top:446px;width:123px">Date début</div>
<div class="c ir" style="left:462px;top:446px;width:123px">null</div>
<div class="c ir dt" style="left:585px;top:446px;width:130px">03/08/2022 00:00:00</div>
<div class="c ir" style="left:715px;top:446px;width:98px">4</div>
<div class="rn" style="top:467px">20</div>
<div class="c ir sel" style="left:30px;top:467px;width:118px">58962</div>
<div class="c " style="left:148px;top:467px;width:88px"><span class="up">HIQUE</span></div>
<div class="c " style="left:236px;top:467px;width:103px">Cyril</div>
<div class="c " style="left:339px;top:467px;width:123px">Date fin</div>
<div class="c ir" style="left:462px;top:467px;width:123px">null</div>
<div class="c ir dt" style="left:585px;top:467px;width:130px">04/08/2022 00:00:00</div>
<div class="c ir" style="left:715px;top:467px;width:98px">4</div>
<div class="rn" style="top:488px">21</div>
<div class="c ir sel" style="left:30px;top:488px;width:118px">58963</div>
<div class="c " style="left:148px;top:488px;width:88px"><span class="up">COPTERE</span></div>
<div class="c " style="left:236px;top:488px;width:103px">Elie</div>
<div class="c " style="left:339px;top:488px;width:123px">Motif</div>
<div class="c " style="left:462px;top:488px;width:123px">2</div>
<div class="c " style="left:585px;top:488px;width:130px"><span class="up">CP</span></div>
<div class="c ir" style="left:715px;top:488px;width:98px">5</div>
<div class="rn" style="top:509px">22</div>
<div class="c ir sel" style="left:30px;top:509px;width:118px">58963</div>
<div class="c " style="left:148px;top:509px;width:88px"><span class="up">COPTERE</span></div>
<div class="c " style="left:236px;top:509px;width:103px">Elie</div>
<div class="c " style="left:339px;top:509px;width:123px">Jours</div>
<div class="c " style="left:462px;top:509px;width:123px">2</div>
<div class="c ir" style="left:585px;top:509px;width:130px">1</div>
<div class="c ir" style="left:715px;top:509px;width:98px">5</div>
<div class="rn" style="top:530px">23</div>
<div class="c ir sel" style="left:30px;top:530px;width:118px">58963</div>
<div class="c " style="left:148px;top:530px;width:88px"><span class="up">COPTERE</span></div>
<div class="c " style="left:236px;top:530px;width:103px">Elie</div>
<div class="c " style="left:339px;top:530px;width:123px">Date début</div>
<div class="c " style="left:462px;top:530px;width:123px">2</div>
<div class="c ir dt" style="left:585px;top:530px;width:130px">01/08/2022 00:00:00</div>
<div class="c ir" style="left:715px;top:530px;width:98px">5</div>
<div class="rn" style="top:551px">24</div>
<div class="c ir sel" style="left:30px;top:551px;width:118px">58963</div>
<div class="c " style="left:148px;top:551px;width:88px"><span class="up">COPTERE</span></div>
<div class="c " style="left:236px;top:551px;width:103px">Elie</div>
<div class="c " style="left:339px;top:551px;width:123px">Date fin</div>
<div class="c " style="left:462px;top:551px;width:123px">2</div>
<div class="c ir dt" style="left:585px;top:551px;width:130px">01/08/2022 00:00:00</div>
<div class="c ir" style="left:715px;top:551px;width:98px">5</div>
<div class="rn" style="top:572px">25</div>
<div class="c ir sel" style="left:30px;top:572px;width:118px">58966</div>
<div class="c " style="left:148px;top:572px;width:88px"><span class="up">PORET</span></div>
<div class="c " style="left:236px;top:572px;width:103px">Eva</div>
<div class="c " style="left:339px;top:572px;width:123px">Motif</div>
<div class="c ir" style="left:462px;top:572px;width:123px">null</div>
<div class="c " style="left:585px;top:572px;width:130px">Maladie</div>
<div class="c ir" style="left:715px;top:572px;width:98px">6</div>
<div class="rn" style="top:593px">26</div>
<div class="c ir sel" style="left:30px;top:593px;width:118px">58966</div>
<div class="c " style="left:148px;top:593px;width:88px"><span class="up">PORET</span></div>
<div class="c " style="left:236px;top:593px;width:103px">Eva</div>
<div class="c " style="left:339px;top:593px;width:123px">Jours</div>
<div class="c ir" style="left:462px;top:593px;width:123px">null</div>
<div class="c ir" style="left:585px;top:593px;width:130px">3</div>
<div class="c ir" style="left:715px;top:593px;width:98px">6</div>
<div class="rn" style="top:614px">27</div>
<div class="c ir sel" style="left:30px;top:614px;width:118px">58966</div>
<div class="c " style="left:148px;top:614px;width:88px"><span class="up">PORET</span></div>
<div class="c " style="left:236px;top:614px;width:103px">Eva</div>
<div class="c " style="left:339px;top:614px;width:123px">Date début</div>
<div class="c ir" style="left:462px;top:614px;width:123px">null</div>
<div class="c ir dt" style="left:585px;top:614px;width:130px">28/08/2022 00:00:00</div>
<div class="c ir" style="left:715px;top:614px;width:98px">6</div>
<div class="rn" style="top:635px">28</div>
<div class="c ir sel" style="left:30px;top:635px;width:118px">58966</div>
<div class="c " style="left:148px;top:635px;width:88px"><span class="up">PORET</span></div>
<div class="c " style="left:236px;top:635px;width:103px">Eva</div>
<div class="c " style="left:339px;top:635px;width:123px">Date fin</div>
<div class="c ir" style="left:462px;top:635px;width:123px">null</div>
<div class="c ir dt" style="left:585px;top:635px;width:130px">30/08/2022 00:00:00</div>
<div class="c ir" style="left:715px;top:635px;width:98px">6</div>
<div class="rn" style="top:656px">29</div>
<div class="c ir sel" style="left:30px;top:656px;width:118px">58966</div>
<div class="c " style="left:148px;top:656px;width:88px"><span class="up">PORET</span></div>
<div class="c " style="left:236px;top:656px;width:103px">Eva</div>
<div class="c " style="left:339px;top:656px;width:123px">Motif</div>
<div class="c " style="left:462px;top:656px;width:123px">3</div>
<div class="c " style="left:585px;top:656px;width:130px"><span class="up">RTT</span></div>
<div class="c ir" style="left:715px;top:656px;width:98px">7</div>
<div class="rn" style="top:677px">30</div>
<div class="c ir sel" style="left:30px;top:677px;width:118px">58966</div>
<div class="c " style="left:148px;top:677px;width:88px"><span class="up">PORET</span></div>
<div class="c " style="left:236px;top:677px;width:103px">Eva</div>
<div class="c " style="left:339px;top:677px;width:123px">Jours</div>
<div class="c " style="left:462px;top:677px;width:123px">3</div>
<div class="c ir" style="left:585px;top:677px;width:130px">3</div>
<div class="c ir" style="left:715px;top:677px;width:98px">7</div>
<div class="rn" style="top:698px">31</div>
<div class="c ir sel" style="left:30px;top:698px;width:118px">58966</div>
<div class="c " style="left:148px;top:698px;width:88px"><span class="up">PORET</span></div>
<div class="c " style="left:236px;top:698px;width:103px">Eva</div>
<div class="c " style="left:339px;top:698px;width:123px">Date début</div>
<div class="c " style="left:462px;top:698px;width:123px">3</div>
<div class="c ir dt" style="left:585px;top:698px;width:130px">15/08/2022 00:00:00</div>
<div class="c ir" style="left:715px;top:698px;width:98px">7</div>
<div class="rn" style="top:719px">32</div>
<div class="c ir sel" style="left:30px;top:719px;width:118px">58966</div>
<div class="c " style="left:148px;top:719px;width:88px"><span class="up">PORET</span></div>
<div class="c " style="left:236px;top:719px;width:103px">Eva</div>
<div class="c " style="left:339px;top:719px;width:123px">Date fin</div>
<div class="c " style="left:462px;top:719px;width:123px">3</div>
<div class="c ir dt" style="left:585px;top:719px;width:130px">17/08/2022 00:00:00</div>
<div class="c ir" style="left:715px;top:719px;width:98px">7</div>
</div>
</div>
<div style="position:absolute;left:1050px;top:11px;width:1px;height:739px;background:#c9c9c9"></div>
<div class="ptitle">Paramètres d'une requ...</div>
<div class="pclose"></div>
<div class="ptri" style="top:76px"></div>
<div class="psec" style="top:72px">PROPRIÉTÉS</div>
<div class="plbl" style="top:92px">Nom</div>
<div class="pinput">t_Data</div>
<div class="plink">Toutes les propriétés</div>
<div class="ptri" style="top:177px"></div>
<div class="psec" style="top:173px">ÉTAPES APPLIQUÉES</div>
<div class="psteps">
<div class="st" style="top:0px">Source</div>
<div class="st" style="top:20px">Dépivotage</div>
<div class="st" style="top:40px">SplitCol</div>
<div class="st" style="top:60px">Idx<svg class="gear" viewBox="0 0 12 11"><g fill="none" stroke="#a0a0a0" stroke-width="1.3"><circle cx="6" cy="5.5" r="2.6"/><path d="M6 0.5V2.6M6 8.4V10.5M1 5.5H3.1M8.9 5.5H11M2.5 2L4 3.5M8 7.5L9.5 9M9.5 2L8 3.5M4 7.5L2.5 9"/></g></svg></div>
<div class="st stsel" style="top:80px"><span class="stx"></span>Val_Ent_Idx</div>
<div class="st" style="top:100px">Pivot<svg class="gear" viewBox="0 0 12 11"><g fill="none" stroke="#a0a0a0" stroke-width="1.3"><circle cx="6" cy="5.5" r="2.6"/><path d="M6 0.5V2.6M6 8.4V10.5M1 5.5H3.1M8.9 5.5H11M2.5 2L4 3.5M8 7.5L9.5 9M9.5 2L8 3.5M4 7.5L2.5 9"/></g></svg></div>
<div class="st" style="top:120px">ColSupp</div>
<div class="st" style="top:140px">TypeDate</div>
</div>

</div>
<div class="hl" style="left:710px;top:37px;width:115px;height:711px"></div>
<div class="hl" style="left:1654px;top:43px;width:149px;height:708px"></div>
<div class="hl" style="left:1979px;top:272px;width:109px;height:25px"></div>
<svg class="arrow" width="120" height="50" style="position:absolute;left:836px;top:400px;overflow:visible">
<defs><filter id="sh" x="-20%" y="-40%" width="150%" height="190%"><feGaussianBlur in="SourceAlpha" stdDeviation="2"/><feOffset dx="3" dy="3"/><feComponentTransfer><feFuncA type="linear" slope="0.42"/></feComponentTransfer><feMerge><feMergeNode/><feMergeNode in="SourceGraphic"/></feMerge></filter></defs>
<polygon filter="url(#sh)" fill="#cc0000" points="3.5,19 59,17.4 59,5.8 105.6,20.5 59,36.8 59,25 3.5,25.8"/>
</svg>
</body></html>
